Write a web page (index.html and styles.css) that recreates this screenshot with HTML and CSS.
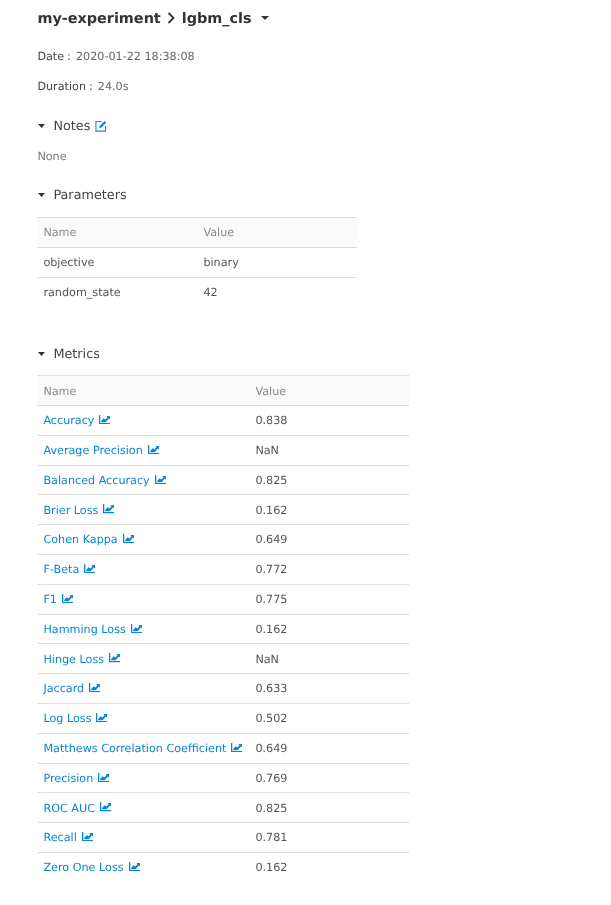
FILE: index.html
```html
<!DOCTYPE html>
<html lang="en">
<head>
<meta charset="utf-8">
<title>lgbm_cls</title>
<link rel="stylesheet" href="styles.css">
</head>
<body>
<main class="page">
  <h1 class="crumbs">
    <span class="label">my-experiment</span>
    <svg class="crumb-sep" width="10" height="14" viewBox="0 0 10 14"><path d="M2.5 2 L7.5 7 L2.5 12" fill="none" stroke="#333" stroke-width="1.8"/></svg>
    <span class="label">lgbm_cls</span>
    <svg class="caret crumb-caret" width="8" height="4" viewBox="0 0 8 4"><path d="M0 0H8L4 4Z"/></svg>
  </h1>
  <p class="meta"><span class="meta-label">Date</span><span class="colon">:</span><span class="meta-value">2020-01-22 18:38:08</span></p>
  <p class="meta"><span class="meta-label">Duration</span><span class="colon">:</span><span class="meta-value">24.0s</span></p>

  <h2 class="section notes-head">
    <svg class="caret" width="7" height="4" viewBox="0 0 8 4" preserveAspectRatio="none"><path d="M0 0H8L4 4Z"/></svg>
    <span class="label">Notes</span>
    <svg class="edit" width="12" height="12" viewBox="0 0 13 13"><path d="M7 1.6H1V12H11.4V6.5" fill="none" stroke="#0d8ed9" stroke-width="1.2"/><path d="M4.5 8.8L5 6.4L10.3 1L12.2 2.8L6.9 8.3Z" fill="#0d8ed9"/></svg>
  </h2>
  <p class="none">None</p>

  <h2 class="section">
    <svg class="caret" width="7" height="4" viewBox="0 0 8 4" preserveAspectRatio="none"><path d="M0 0H8L4 4Z"/></svg>
    <span class="label">Parameters</span>
  </h2>
  <table class="table params">
    <thead><tr><th class="p-name">Name</th><th>Value</th></tr></thead>
    <tbody>
      <tr><td>objective</td><td>binary</td></tr>
      <tr><td>random_state</td><td>42</td></tr>
    </tbody>
  </table>

  <h2 class="section metrics-head">
    <svg class="caret" width="7" height="4" viewBox="0 0 8 4" preserveAspectRatio="none"><path d="M0 0H8L4 4Z"/></svg>
    <span class="label">Metrics</span>
  </h2>
  <table class="table metrics">
    <thead><tr><th class="m-name">Name</th><th>Value</th></tr></thead>
    <tbody id="rows">
      <tr><td><a href="#">Accuracy<svg class="chart" viewBox="0 0 12 10"><use href="#c"/></svg></a></td><td>0.838</td></tr>
      <tr><td><a href="#">Average Precision<svg class="chart" viewBox="0 0 12 10"><use href="#c"/></svg></a></td><td>NaN</td></tr>
      <tr><td><a href="#">Balanced Accuracy<svg class="chart" viewBox="0 0 12 10"><use href="#c"/></svg></a></td><td>0.825</td></tr>
      <tr><td><a href="#">Brier Loss<svg class="chart" viewBox="0 0 12 10"><use href="#c"/></svg></a></td><td>0.162</td></tr>
      <tr><td><a href="#">Cohen Kappa<svg class="chart" viewBox="0 0 12 10"><use href="#c"/></svg></a></td><td>0.649</td></tr>
      <tr><td><a href="#">F-Beta<svg class="chart" viewBox="0 0 12 10"><use href="#c"/></svg></a></td><td>0.772</td></tr>
      <tr><td><a href="#">F1<svg class="chart" viewBox="0 0 12 10"><use href="#c"/></svg></a></td><td>0.775</td></tr>
      <tr><td><a href="#">Hamming Loss<svg class="chart" viewBox="0 0 12 10"><use href="#c"/></svg></a></td><td>0.162</td></tr>
      <tr><td><a href="#">Hinge Loss<svg class="chart" viewBox="0 0 12 10"><use href="#c"/></svg></a></td><td>NaN</td></tr>
      <tr><td><a href="#">Jaccard<svg class="chart" viewBox="0 0 12 10"><use href="#c"/></svg></a></td><td>0.633</td></tr>
      <tr><td><a href="#">Log Loss<svg class="chart" viewBox="0 0 12 10"><use href="#c"/></svg></a></td><td>0.502</td></tr>
      <tr><td><a href="#">Matthews Correlation Coefficient<svg class="chart" viewBox="0 0 12 10"><use href="#c"/></svg></a></td><td>0.649</td></tr>
      <tr><td><a href="#">Precision<svg class="chart" viewBox="0 0 12 10"><use href="#c"/></svg></a></td><td>0.769</td></tr>
      <tr><td><a href="#">ROC AUC<svg class="chart" viewBox="0 0 12 10"><use href="#c"/></svg></a></td><td>0.825</td></tr>
      <tr><td><a href="#">Recall<svg class="chart" viewBox="0 0 12 10"><use href="#c"/></svg></a></td><td>0.781</td></tr>
      <tr><td><a href="#">Zero One Loss<svg class="chart" viewBox="0 0 12 10"><use href="#c"/></svg></a></td><td>0.162</td></tr>
    </tbody>
  </table>
</main>
<svg class="defs" width="0" height="0"><defs><g id="c"><path d="M0.7 0V9.3H12" fill="none" stroke="#0a85d1" stroke-width="1.4"/><path d="M2.4 7.8L2.4 6.4L5 3.6L7 5L9.3 2.4L8 1H12V5L10.8 3.8L7.2 7.8Z" fill="#0a85d1"/></g></defs></svg>
</body>
</html>
```
FILE: styles.css
```css
html, body { margin: 0; padding: 0; background: #fff; }
body { font-family: "DejaVu Sans", sans-serif; color: #555; font-size: 11.2px; text-rendering: geometricPrecision; }
.page { padding: 8px 0 20px 37.4px; will-change: transform; }
.crumbs { margin: 0; display: flex; align-items: center; height: 20px; font-size: 14.4px; font-weight: 700; color: #333; line-height: 20px; }
.label { padding-top: 2px; }
.crumb-sep { margin: 0 5.5px; }
.crumb-caret { margin-left: 9px; }
.caret { fill: #333; flex: none; }
.meta { margin: 0; height: 30px; line-height: 30px; color: #666; }
.crumbs + .meta { margin-top: 14px; }
.meta-label { color: #444; }
.colon { margin: 0 5px 0 3px; color: #444; }
.section { margin: 0; display: flex; align-items: center; font-weight: 400; font-size: 12.8px; color: #444; height: 20px; line-height: 20px; }
.section .caret { margin: 0 8px 0 1px; }
.notes-head { margin-top: 14px; }
.edit { margin-left: 4.5px; flex: none; margin-top: -1px; }
.none { margin: 11px 0 0; height: 20px; line-height: 20px; color: #777; }
.none + .section { margin-top: 18px; }
.table { border-collapse: collapse; table-layout: fixed; margin-top: 12px; margin-left: -0.4px; }
.table th, .table td { height: 29.8px; box-sizing: border-box; padding: 0 6.4px; text-align: left; border-top: 1px solid #ddd; font-weight: 400; color: #555; white-space: nowrap; }
.table th { background: #fafafa; color: #8a8a8a; }
.params { width: 320px; }
.p-name { width: 160px; }
.metrics-head { margin-top: 37px; }
.metrics { width: 372px; margin-top: 11.3px; }
.metrics th { padding-top: 1px; }
.metrics td { padding-top: 0.6px; }
.m-name { width: 212px; }
.table a { color: #0a85d1; text-decoration: none; display: inline-flex; align-items: center; }
.chart { width: 11px; height: 9.2px; margin-left: 5px; position: relative; top: -1px; }
.defs { position: absolute; }
```
